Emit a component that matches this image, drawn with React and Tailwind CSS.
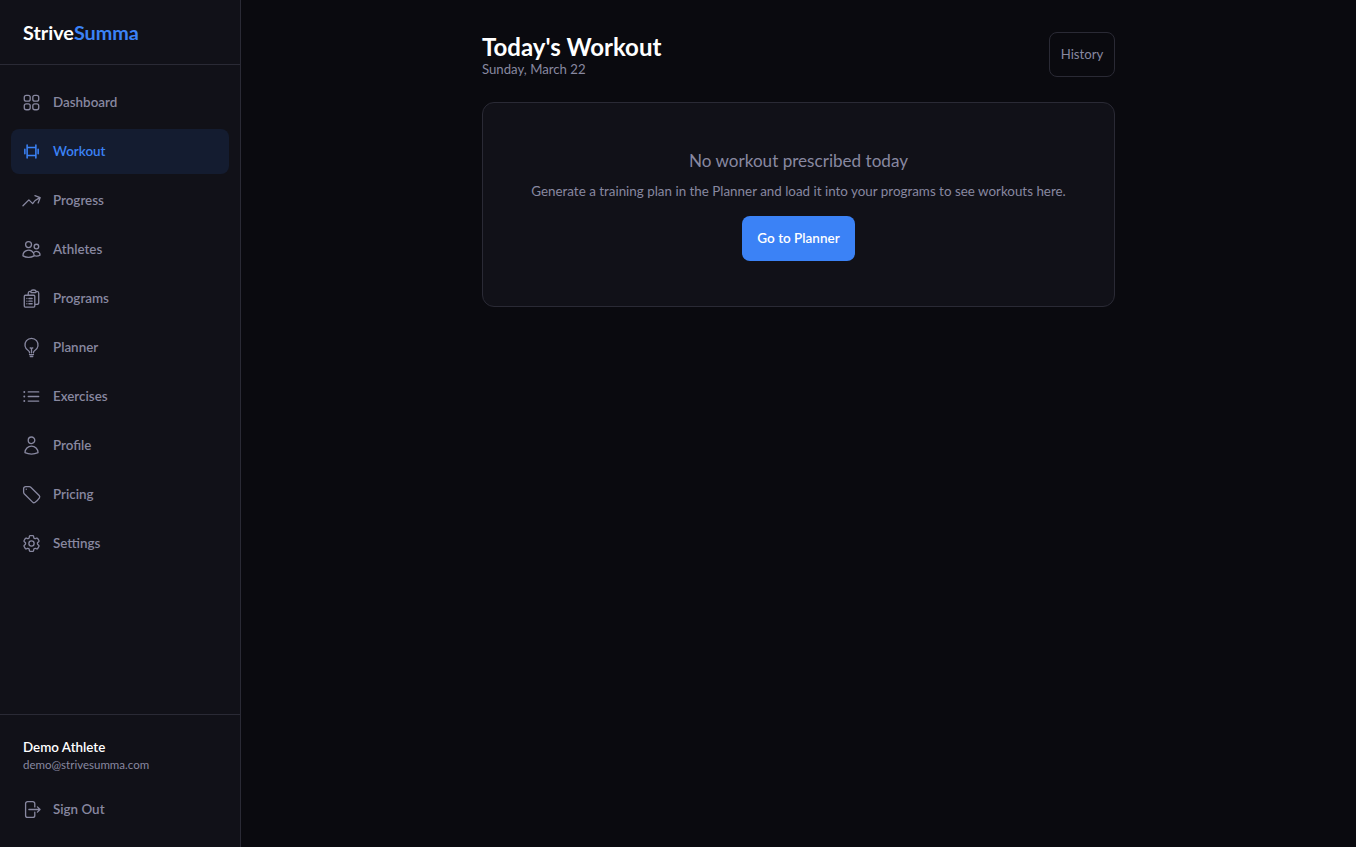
import React from "react";
import {
  HiOutlineSquares2X2, HiOutlineArrowTrendingUp, HiOutlineUsers, HiOutlineClipboardDocumentList,
  HiOutlineLightBulb, HiOutlineListBullet, HiOutlineUser, HiOutlineTag, HiOutlineCog6Tooth,
  HiOutlineArrowRightOnRectangle,
} from "react-icons/hi2";

function WorkoutIcon({ className }) {
  return (
    <svg viewBox="0 0 24 24" fill="none" stroke="currentColor" strokeWidth="1.75" strokeLinecap="round" strokeLinejoin="round" className={className}>
      <path d="M7 4.6v14.8M17 4.6v14.8M7 7.4h10M7 16.6h10M4.4 9.5v5M19.6 9.5v5" />
    </svg>
  );
}

const items = [
  ["Dashboard", HiOutlineSquares2X2],
  ["Workout", WorkoutIcon],
  ["Progress", HiOutlineArrowTrendingUp],
  ["Athletes", HiOutlineUsers],
  ["Programs", HiOutlineClipboardDocumentList],
  ["Planner", HiOutlineLightBulb],
  ["Exercises", HiOutlineListBullet],
  ["Profile", HiOutlineUser],
  ["Pricing", HiOutlineTag],
  ["Settings", HiOutlineCog6Tooth],
];

export default function App() {
  return (
    <div className="flex h-[847px] bg-[#0a0a0f] font-['Lato',sans-serif] overflow-hidden">
      <aside className="flex w-[241px] shrink-0 flex-col border-r border-[#2a2a35] bg-[#111118]">
        <div className="flex h-[65px] items-center border-b border-[#2a2a35] px-[23px] pt-[1px] text-[19.8px] font-bold">
          <span className="text-white">Strive</span>
          <span className="text-[#3b82f6]">Summa</span>
        </div>
        <nav className="flex flex-1 flex-col gap-1 px-[11px] pt-[15px]">
          {items.map(([label, Icon]) => {
            const active = label === "Workout";
            return (
              <div
                key={label}
                className={
                  "flex h-[45px] items-center gap-[11px] rounded-lg pl-[10px] text-[13.4px] font-semibold " +
                  (active ? "bg-[#141c30] text-[#3b82f6]" : "text-[#8888a0]")
                }
              >
                <Icon className="h-[21px] w-[21px] shrink-0" />
                {label}
              </div>
            );
          })}
        </nav>
        <div className="border-t border-[#2a2a35] px-[11px] pt-[23px] pb-[15px]">
          <div className="px-3 text-[13.4px] font-semibold leading-[18px] text-white">Demo Athlete</div>
          <div className="px-3 text-[11.5px] leading-[18px] text-[#8888a0]">demo@strivesumma.com</div>
          <div className="mt-[13px] flex h-[45px] items-center gap-[11px] rounded-lg pl-[10px] text-[13.4px] font-semibold text-[#8888a0]">
            <HiOutlineArrowRightOnRectangle className="h-[21px] w-[21px] shrink-0" />
            Sign Out
          </div>
        </div>
      </aside>
      <main className="flex-1">
        <div className="mx-auto w-[633px] pt-[32px]">
          <div className="flex items-start justify-between">
            <div>
              <h1 className="text-[24px] font-bold leading-[29px] text-white">Today's Workout</h1>
              <p className="text-[13.2px] leading-[17px] text-[#8888a0]">Sunday, March 22</p>
            </div>
            <button className="h-[45px] w-[66px] rounded-lg border border-[#2a2a35] pt-[1px] text-[13.2px] text-[#8888a0]">History</button>
          </div>
          <div className="mt-[24px] flex h-[205px] flex-col items-center rounded-xl border border-[#2a2a35] bg-[#111118] pt-[46px]">
            <h2 className="text-[17.1px] leading-[24px] text-[#8888a0]">No workout prescribed today</h2>
            <p className="mt-[8px] text-[13.4px] leading-[20px] text-[#8888a0]">Generate a training plan in the Planner and load it into your programs to see workouts here.</p>
            <button className="mt-[15px] h-[45px] w-[113px] rounded-lg bg-[#3b82f6] text-[13.5px] font-semibold text-white">Go to Planner</button>
          </div>
        </div>
      </main>
    </div>
  );
}
